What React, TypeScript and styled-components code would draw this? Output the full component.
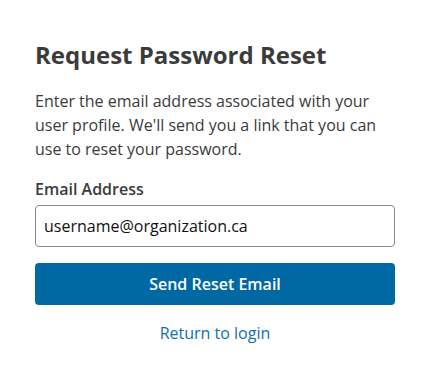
import React from "react";
import styled, { createGlobalStyle } from "styled-components";

const Global = createGlobalStyle`
  html, body { margin: 0; padding: 0; background: #fff; }
  body { font-family: "Open Sans", "Noto Sans", sans-serif; color: #3b3b3b; }
  * { box-sizing: border-box; }
`;

const Page = styled.div`
  padding: 39px 34px 0 35px;
  width: 429px;
`;

const Form = styled.form`
  display: flex;
  flex-direction: column;
  width: 360px;
`;

const Title = styled.h1`
  margin: 0;
  font-size: 24px;
  font-weight: 700;
  line-height: 32px;
  color: #3b3b3b;
`;

const Intro = styled.p`
  margin: 18px 0 0;
  font-size: 16px;
  line-height: 24px;
  color: #3b3b3b;
`;

const Label = styled.label`
  margin-top: 17px;
  font-size: 16px;
  font-weight: 600;
  line-height: 22px;
  color: #3b3b3b;
`;

const Input = styled.input`
  margin-top: 5px;
  height: 42px;
  padding: 0 8px;
  border: 1px solid #8a8a8a;
  border-radius: 4px;
  font-family: inherit;
  font-size: 16px;
  color: #111;
  outline: none;
`;

const Button = styled.button`
  margin-top: 16px;
  height: 42px;
  border: none;
  border-radius: 4px;
  background: #0069a4;
  color: #fff;
  font-family: inherit;
  font-size: 16px;
  font-weight: 600;
`;

const Link = styled.a`
  margin-top: 16px;
  align-self: center;
  font-size: 16px;
  line-height: 24px;
  color: #0f70ae;
  text-decoration: none;
`;

export default function App() {
  return (
    <>
      <Global />
      <Page>
        <Form onSubmit={(e) => e.preventDefault()}>
          <Title>Request Password Reset</Title>
          <Intro>
            Enter the email address associated with your user profile. We'll send you a link that you can use to reset your password.
          </Intro>
          <Label htmlFor="email">Email Address</Label>
          <Input id="email" defaultValue="username@organization.ca" />
          <Button type="submit">Send Reset Email</Button>
          <Link href="#">Return to login</Link>
        </Form>
      </Page>
    </>
  );
}
